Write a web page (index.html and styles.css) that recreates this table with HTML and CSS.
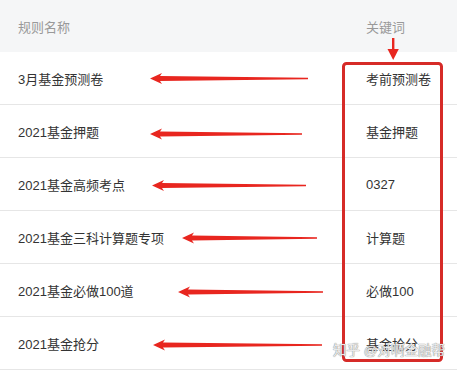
FILE: index.html
```html
<!DOCTYPE html>
<html lang="zh-CN">
<head>
<meta charset="utf-8">
<title>规则</title>
<link rel="stylesheet" href="styles.css">
</head>
<body>
<div class="page">
  <div class="table">
    <div class="row head">
      <div class="cell name">规则名称</div>
      <div class="cell kw">关键词</div>
    </div>
    <div class="row">
      <div class="cell name">3月基金预测卷</div>
      <div class="cell kw">考前预测卷</div>
    </div>
    <div class="row">
      <div class="cell name">2021基金押题</div>
      <div class="cell kw">基金押题</div>
    </div>
    <div class="row">
      <div class="cell name">2021基金高频考点</div>
      <div class="cell kw">0327</div>
    </div>
    <div class="row">
      <div class="cell name">2021基金三科计算题专项</div>
      <div class="cell kw">计算题</div>
    </div>
    <div class="row">
      <div class="cell name">2021基金必做100道</div>
      <div class="cell kw">必做100</div>
    </div>
    <div class="row">
      <div class="cell name">2021基金抢分</div>
      <div class="cell kw">基金抢分</div>
    </div>
  </div>

  <svg class="marks" width="457" height="372" viewBox="0 0 457 372">
    <rect x="343.5" y="63.5" width="98" height="297" rx="3" fill="none" stroke="#d62b28" stroke-width="3"/>
    <g fill="#e8261f">
      <rect x="392" y="38" width="2.4" height="12"/>
      <path d="M387.5 49 L398.8 49 L393.2 60 Z"/>
      <path d="M150 78.5 L162 73 L160 76 L308 77.8 L308 79.2 L160 81 L162 84 Z"/>
      <path d="M150 134 L162 128.5 L160 131.5 L302 133.3 L302 134.7 L160 136.5 L162 139.5 Z"/>
      <path d="M152 185.5 L164 180 L162 183 L306 184.8 L306 186.2 L162 188 L164 191 Z"/>
      <path d="M182 238 L194 232.5 L192 235.5 L317 237.3 L317 238.7 L192 240.5 L194 243.5 Z"/>
      <path d="M178 292 L190 286.5 L188 289.5 L323 291.3 L323 292.7 L188 294.5 L190 297.5 Z"/>
      <path d="M153 345 L165 339.5 L163 342.5 L322 344.3 L322 345.7 L163 347.5 L165 350.5 Z"/>
    </g>
  </svg>
  <div class="watermark">知乎 @对啊金融帮</div>
</div>
</body>
</html>
```

FILE: styles.css
```css
html, body {
  margin: 0;
  padding: 0;
  background: #ffffff;
}

.page {
  position: relative;
  width: 457px;
  height: 372px;
  overflow: hidden;
  font-family: "Liberation Sans", "Noto Sans CJK SC", sans-serif;
}

.table {
  display: flex;
  flex-direction: column;
}

.row {
  display: grid;
  grid-template-columns: 1fr 91px;
  align-items: center;
  height: 52px;
  border-bottom: 1px solid #e6e6e6;
  font-size: 13px;
  color: #333333;
}

.row.head {
  background: #f5f6f7;
  border-bottom: none;
  color: #999999;
}

.cell.name {
  padding-left: 18px;
}

.marks {
  position: absolute;
  top: 0;
  left: 0;
  pointer-events: none;
}

.watermark {
  position: absolute;
  left: 333px;
  top: 342px;
  font-size: 13.5px;
  line-height: 18px;
  color: rgba(248, 248, 248, 0.9);
  text-shadow: 0 0 1px #8a8a8a, 0 0 1px #8a8a8a;
  white-space: nowrap;
}
```
